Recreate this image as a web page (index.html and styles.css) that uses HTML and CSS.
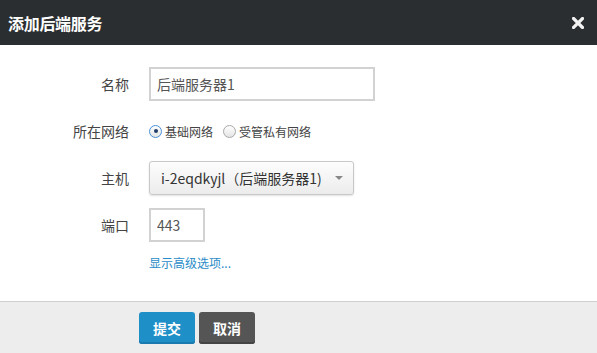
FILE: index.html
```html
<!DOCTYPE html>
<html lang="zh-CN">
<head>
    <meta charset="UTF-8">
    <title>添加后端服务</title>
    <link rel="stylesheet" href="styles.css">
</head>
<body>
    <div class="dialog">
        <div class="dialog-header">
            <h2>添加后端服务</h2>
            <svg class="close" width="12" height="12" viewBox="0 0 12 12">
                <path d="M1.5 1.5 L10.5 10.5 M10.5 1.5 L1.5 10.5" stroke="#f2f2f2" stroke-width="3.2" stroke-linecap="square"/>
            </svg>
        </div>

        <!-- Form body -->
        <form class="dialog-body">
            <label class="label">名称</label>
            <div class="field">
                <input type="text" class="text-input name-input" value="后端服务器1">
            </div>

            <label class="label">所在网络</label>
            <div class="field radios">
                <label class="radio"><span class="dot checked"></span>基础网络</label>
                <label class="radio"><span class="dot"></span>受管私有网络</label>
            </div>

            <label class="label">主机</label>
            <div class="field">
                <div class="select">
                    <span>i-2eqdkyjl（后端服务器1)</span>
                    <span class="caret"></span>
                </div>
            </div>

            <label class="label">端口</label>
            <div class="field">
                <input type="text" class="text-input port-input" value="443">
            </div>

            <span></span>
            <div class="field more-row">
                <a href="#" class="more">显示高级选项...</a>
            </div>
        </form>

        <div class="dialog-footer">
            <button type="submit" class="btn btn-primary">提交</button>
            <button type="button" class="btn btn-dark">取消</button>
        </div>
    </div>
</body>
</html>
```
FILE: styles.css
```css
body {
    margin: 0;
    font-family: "Noto Sans CJK SC", "Liberation Sans", sans-serif;
    color: #444;
    background: #fff;
}
.dialog {
    width: 597px;
    height: 353px;
    display: flex;
    flex-direction: column;
}
.dialog-header {
    height: 45px;
    background-color: #2b2e30;
    color: #fff;
    display: flex;
    align-items: center;
    justify-content: space-between;
    padding: 0 13px 0 8px;
}
.dialog-header h2 {
    margin: 0;
    font-size: 16px;
    font-weight: bold;
    letter-spacing: -0.3px;
}
.close {
    display: block;
    margin-top: 1px;
}
.dialog-body {
    flex: 1;
    display: grid;
    grid-template-columns: 129px 1fr;
    grid-auto-rows: 34px;
    column-gap: 20px;
    row-gap: 13px;
    padding-top: 22px;
    align-content: start;
}
.label {
    font-size: 14px;
    color: #444;
    text-align: right;
    align-self: center;
}
.field {
    display: flex;
    align-items: center;
}
.text-input {
    box-sizing: border-box;
    height: 34px;
    border: 2px solid #d2d2d2;
    padding: 0 6px;
    font-family: inherit;
    font-size: 14px;
    color: #555;
    outline: none;
}
.name-input {
    width: 226px;
}
.port-input {
    width: 56px;
}
.radios {
    gap: 10px;
}
.radio {
    display: flex;
    align-items: center;
    font-size: 12px;
    color: #444;
}
.dot {
    box-sizing: border-box;
    width: 13px;
    height: 13px;
    border: 1px solid #a8a8a8;
    border-radius: 50%;
    background: linear-gradient(#fff, #e4e4e4);
    margin-right: 3px;
    display: flex;
    align-items: center;
    justify-content: center;
}
.dot.checked {
    border-color: #4a90d9;
}
.dot.checked::after {
    content: "";
    width: 4px;
    height: 4px;
    border-radius: 50%;
    background: #1f3f6a;
}
.select {
    box-sizing: border-box;
    width: 205px;
    height: 34px;
    border: 1px solid #c8c8c8;
    border-radius: 3px;
    background: linear-gradient(#fdfdfd, #ececec);
    box-shadow: 0 1px 2px rgba(0, 0, 0, 0.12);
    display: flex;
    align-items: center;
    justify-content: space-between;
    padding: 0 10px 0 11px;
    font-size: 14px;
    color: #333;
}
.caret {
    width: 0;
    height: 0;
    border-left: 4px solid transparent;
    border-right: 4px solid transparent;
    border-top: 4px solid #888;
}
.more-row {
    height: 18px;
    margin-top: -2px;
}
.more {
    font-size: 12px;
    color: #2a8bc8;
    text-decoration: none;
}
.dialog-footer {
    height: 52px;
    box-sizing: border-box;
    border-top: 1px solid #cfcfcf;
    background-color: #ededed;
    display: flex;
    align-items: flex-start;
    gap: 4px;
    padding: 10px 0 0 139px;
}
.btn {
    width: 56px;
    height: 32px;
    border: none;
    border-radius: 3px;
    color: #fff;
    font-family: inherit;
    font-size: 14px;
    font-weight: bold;
    cursor: pointer;
}
.btn-primary {
    background-color: #1f8fc8;
    box-shadow: inset 0 -2px 0 #1a7ab0;
}
.btn-dark {
    background-color: #555;
    box-shadow: inset 0 -2px 0 #444;
}
```
